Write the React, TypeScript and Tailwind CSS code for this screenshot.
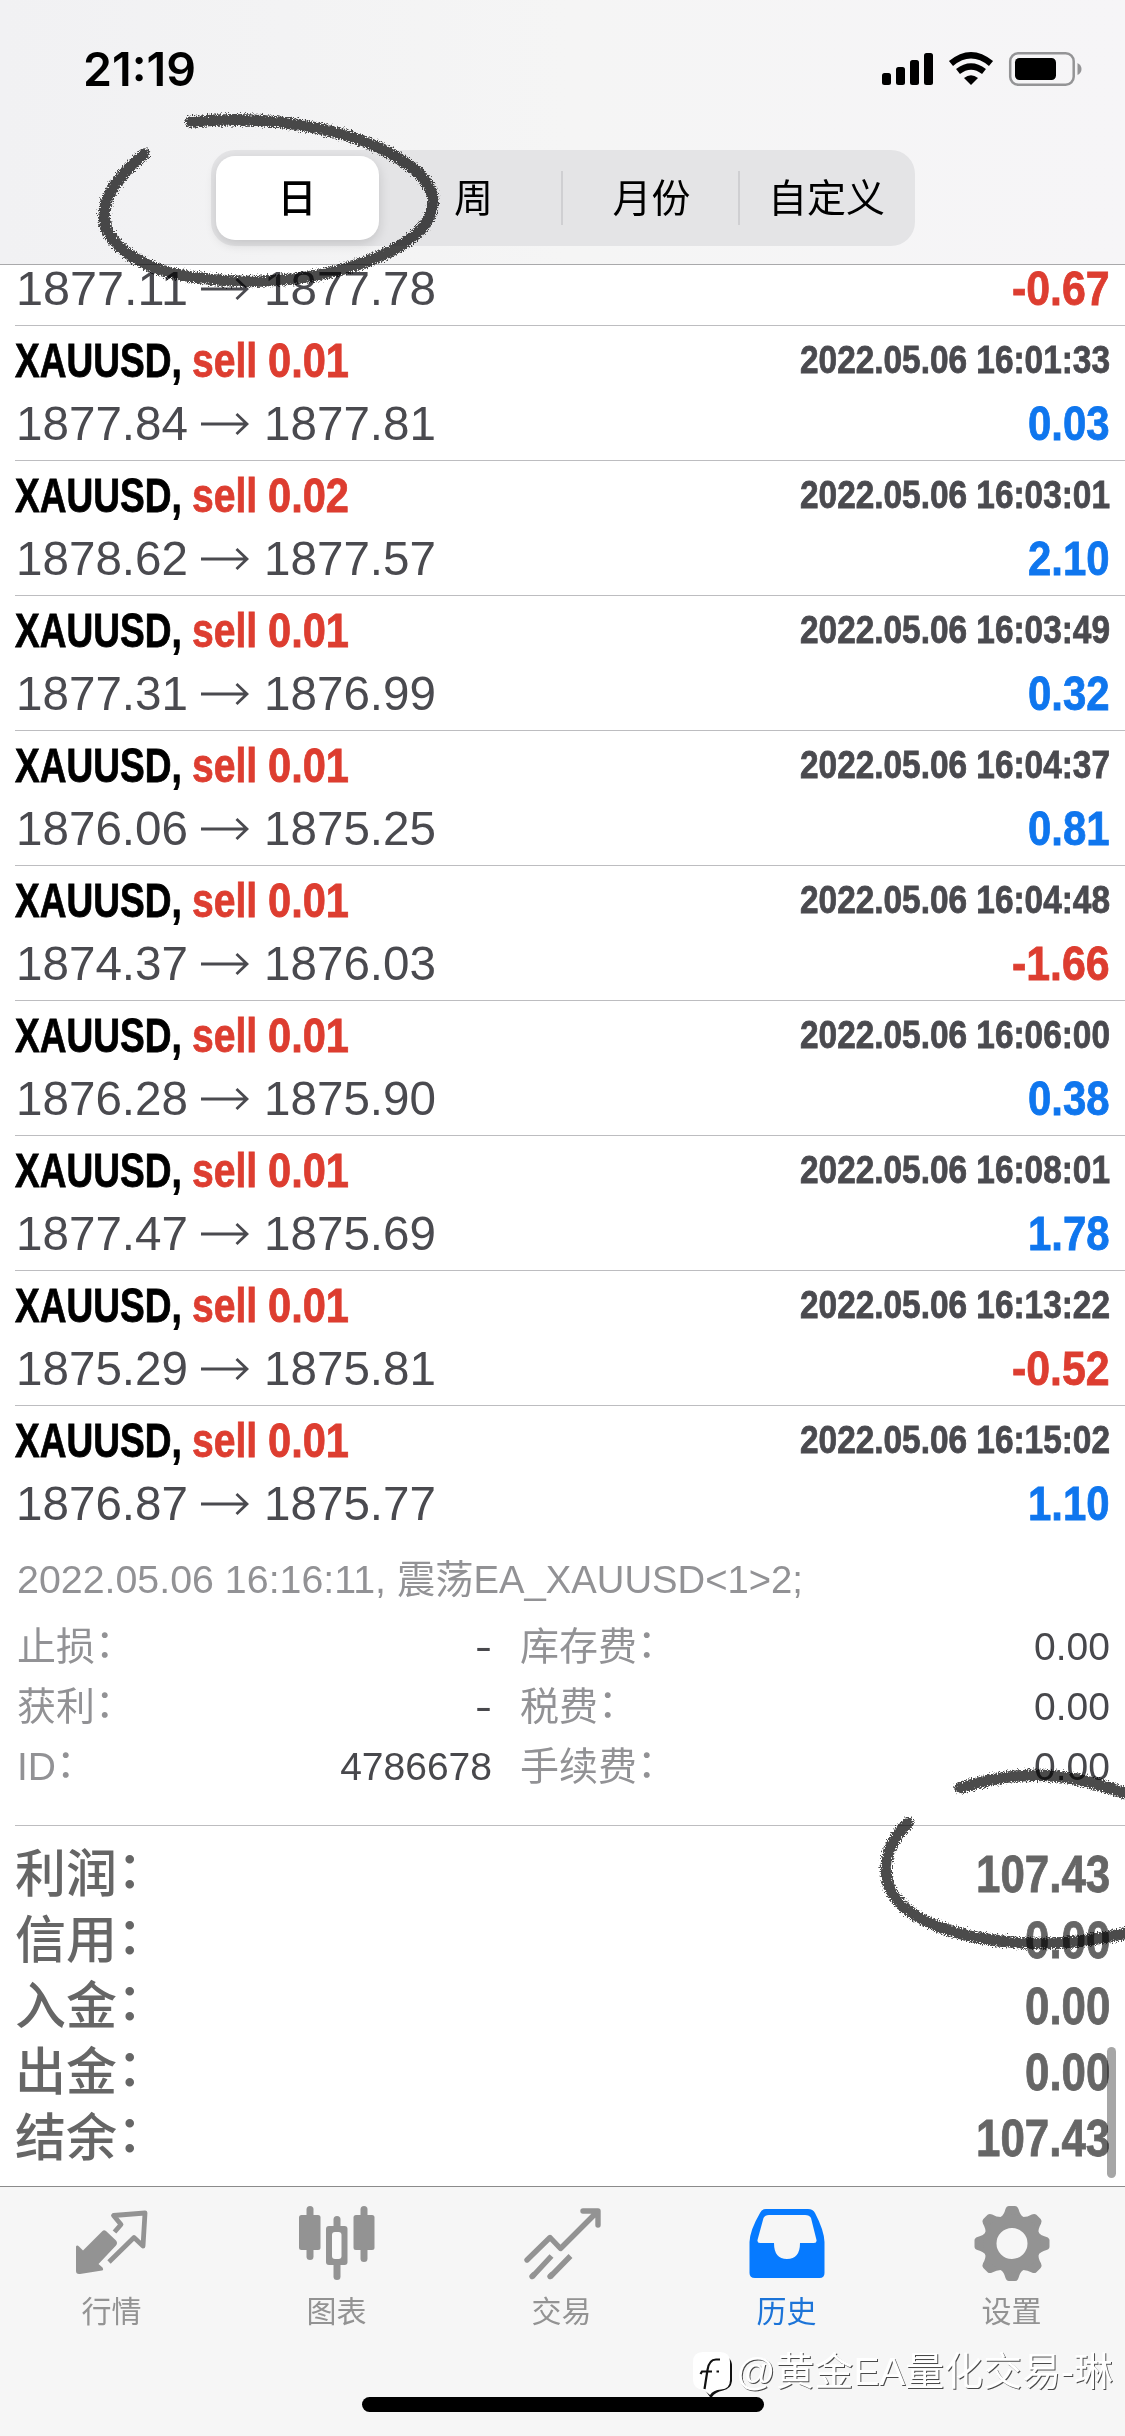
import { useLayoutEffect, useRef, type ReactNode } from "react";

/** Text squeezed or stretched horizontally so that its advance equals `width`. */
function Fit({ width, className = "", children }: { width: number; className?: string; children: ReactNode }) {
  const ref = useRef<HTMLSpanElement>(null);
  useLayoutEffect(() => {
    const el = ref.current;
    if (!el) return;
    el.style.transform = "none";
    el.style.transform = `scaleX(${width / el.getBoundingClientRect().width})`;
  }, [width, children]);
  return (
    <span className="inline-block whitespace-nowrap" style={{ width }}>
      <span ref={ref} className={`inline-block origin-left whitespace-pre ${className}`}>
        {children}
      </span>
    </span>
  );
}

/** Width of condensed bold figures for a given digit pitch. */
function figures(text: string, digit: number) {
  return [...text].reduce((w, c) => w + (c === "." ? digit * 0.5 : c === "-" ? digit * 0.69 : digit), 0);
}

/** Field name followed by a raised full-width colon. */
function Label({ children }: { children: ReactNode }) {
  return (
    <span>
      {children}
      <span className="inline-block -translate-y-[0.07em]">：</span>
    </span>
  );
}

type Deal = { lots: string; time: string; from: string; to: string; profit: string };

const deals: Deal[] = [
  { lots: "0.01", time: "2022.05.06 16:01:33", from: "1877.84", to: "1877.81", profit: "0.03" },
  { lots: "0.02", time: "2022.05.06 16:03:01", from: "1878.62", to: "1877.57", profit: "2.10" },
  { lots: "0.01", time: "2022.05.06 16:03:49", from: "1877.31", to: "1876.99", profit: "0.32" },
  { lots: "0.01", time: "2022.05.06 16:04:37", from: "1876.06", to: "1875.25", profit: "0.81" },
  { lots: "0.01", time: "2022.05.06 16:04:48", from: "1874.37", to: "1876.03", profit: "-1.66" },
  { lots: "0.01", time: "2022.05.06 16:06:00", from: "1876.28", to: "1875.90", profit: "0.38" },
  { lots: "0.01", time: "2022.05.06 16:08:01", from: "1877.47", to: "1875.69", profit: "1.78" },
  { lots: "0.01", time: "2022.05.06 16:13:22", from: "1875.29", to: "1875.81", profit: "-0.52" },
  { lots: "0.01", time: "2022.05.06 16:15:02", from: "1876.87", to: "1875.77", profit: "1.10" },
];

function PriceLine({ from, to, profit }: { from: string; to: string; profit: string }) {
  return (
    <div className="flex h-[60px] items-center justify-between text-[48px] leading-[60px]">
      <div className="flex items-center pl-px text-[#4a4a4f]">
        <Fit width={172}>{from}</Fit>
        <svg className="ml-[13px] mr-[15px] h-6 w-[48px]" viewBox="0 0 48 24" fill="none" stroke="currentColor" strokeWidth="2.8">
          <path d="M0 12H46M35.5 2L46 12L35.5 22" />
        </svg>
        <Fit width={172}>{to}</Fit>
      </div>
      <Fit
        width={figures(profit, 23.3)}
        className={
          profit.startsWith("-")
            ? "font-bold text-[#dd3d30] [-webkit-text-stroke:0.8px]"
            : "font-bold text-[#0f76ee] [-webkit-text-stroke:0.8px]"
        }
      >
        {profit}
      </Fit>
    </div>
  );
}

function DealRow({ deal }: { deal: Deal }) {
  return (
    <div className="ml-[15px] flex h-[135px] flex-col border-t border-[#bdbdc0] pr-[15px]">
      <div className="mt-[5px] flex h-[60px] items-center justify-between font-bold leading-[60px] [-webkit-text-stroke:0.8px]">
        <div className="flex text-[48px] text-black">
          <Fit width={177}>XAUUSD, </Fit>
          <Fit width={76} className="text-[#dd3d30]">sell </Fit>
          <Fit width={81} className="text-[#dd3d30]">{deal.lots}</Fit>
        </div>
        <div className="-mt-[3px] text-[39px] text-[#4a4a4f]">
          <Fit width={310}>{deal.time}</Fit>
        </div>
      </div>
      <div className="mt-[3px]">
        <PriceLine from={deal.from} to={deal.to} profit={deal.profit} />
      </div>
    </div>
  );
}

const details = [
  ["止损", "-", "库存费", "0.00"],
  ["获利", "-", "税费", "0.00"],
  ["ID", "4786678", "手续费", "0.00"],
];

const totals = [
  ["利润", "107.43"],
  ["信用", "0.00"],
  ["入金", "0.00"],
  ["出金", "0.00"],
  ["结余", "107.43"],
];

function StatusBar() {
  return (
    <div className="flex h-[150px] items-start justify-between pl-[83px] pr-[43px] pt-[42px]">
      <div className="font-['Inter'] text-[46px] font-semibold leading-[54px] text-black">
        <Fit width={113}>21:19</Fit>
      </div>
      <svg className="mt-[9px] h-[38px] w-[200px]" viewBox="0 0 200 38">
        <g fill="#000">
          <rect x="0" y="22" width="9" height="12" rx="2.5" />
          <rect x="14" y="16" width="9" height="18" rx="2.5" />
          <rect x="28" y="9" width="9" height="25" rx="2.5" />
          <rect x="42" y="2" width="9" height="32" rx="2.5" />
        </g>
        <g fill="none" stroke="#000" strokeWidth="6.4">
          <path d="M69 12.5Q89 -4 109 12.5" />
          <path d="M76 20.5Q89 10.5 102 20.5" />
        </g>
        <path d="M82 27Q89 21.5 96 27L89 34Z" />
        <rect x="128.200" y="2.200" width="63.500" height="31.500" rx="8" fill="none" stroke="#949496" strokeWidth="2.500" />
        <rect x="133" y="7" width="41" height="22" rx="4.500" />
        <path d="M195.500 12Q199.500 14 199.500 18T195.500 24Z" fill="#949496" />
      </svg>
    </div>
  );
}

function Segments() {
  return (
    <div className="mx-auto flex h-[96px] w-[704px] items-center rounded-[24px] bg-[#e4e4e6] p-[5px] text-[39px] text-black">
      <div className="flex h-[84px] w-[163px] items-center justify-center rounded-[19px] bg-white pt-[2px] font-medium shadow-[0_4px_12px_rgba(0,0,0,0.14)]">日</div>
      <div className="flex h-[84px] w-[182px] items-center justify-center pl-2 pt-[2px]">周</div>
      <div className="h-[54px] w-[2px] bg-[#cfcfd2]" />
      <div className="flex h-[84px] w-[175px] items-center justify-center pl-[3px] pt-[2px]">月份</div>
      <div className="h-[54px] w-[2px] bg-[#cfcfd2]" />
      <div className="flex h-[84px] flex-1 items-center justify-center pl-[4px] pt-[2px]">自定义</div>
    </div>
  );
}

function QuotesIcon() {
  return (
    <svg className="h-[80px] w-[80px]" viewBox="0 0 80 80" fill="currentColor">
      <path d="M4 40.500Q5 38.500 7 40.500L11 44.500L30.500 25Q32 23.500 34 25L44 34.500Q46 37 44 39.500L26.500 58L30.500 61.500Q32 64 30 64.500L8 68Q4 68.500 4 65Z" />
      <path d="M42.500 26L49 18.500L41.500 9.500L73 7L71 40L62 31.500L37 56" fill="none" stroke="currentColor" strokeWidth="4.800" strokeLinejoin="round" />
    </svg>
  );
}

function ChartIcon() {
  return (
    <svg className="h-[80px] w-[80px]" viewBox="0 0 80 80" fill="currentColor">
      <rect x="9.500" y="0" width="7" height="54" rx="3.500" />
      <rect x="2" y="9" width="21.500" height="35" rx="2.500" />
      <rect x="63.500" y="0" width="7" height="56" rx="3.500" />
      <rect x="56.500" y="9" width="21" height="35" rx="2.500" />
      <rect x="36.500" y="10" width="7" height="64" rx="3.500" />
      <rect x="29" y="20" width="21.500" height="39" rx="3" />
      <rect x="35" y="26" width="9.500" height="27" rx="3" fill="#fafafa" />
    </svg>
  );
}

function TradeIcon() {
  return (
    <svg className="h-[80px] w-[80px]" viewBox="0 0 80 80" fill="none" stroke="currentColor" strokeWidth="5.4">
      <path strokeLinecap="round" strokeLinejoin="round" d="M5 54L28 31.500L38.500 42.500L75 6M61 5H76V19" />
      <path d="M10 71L29.500 50M28 71L48.500 50" />
      <path strokeLinecap="round" d="M10 70.500L12 68.500M28 70.500L30 68.500" />
    </svg>
  );
}

function HistoryIcon() {
  return (
    <svg className="h-[80px] w-[80px]" viewBox="0 0 80 80">
      <path fillRule="evenodd" fill="#067aff" d="M19 3H61Q66 3 68 7Q77 24 77.500 36V67Q77.500 72 72.500 72H8Q2.500 72 2.500 67V36Q3 24 13 7Q15 3 19 3ZM22 9Q18 9 16.500 12L10.500 34Q10 37 13 37H27Q27 53 40 53T53 37H67Q70 37 69.500 34L64 12Q62.500 9 58 9Z" />
    </svg>
  );
}

function SettingsIcon() {
  const teeth = [0, 45, 90, 135, 180, 225, 270, 315];
  return (
    <svg className="h-[80px] w-[80px]" viewBox="0 0 80 80" fill="currentColor">
      {teeth.map((a) => (
        <path key={a} transform={`rotate(${a} 40 37.5)`} d="M28 12Q32 9 33.500 3Q34.500 0 37 0H43Q45.500 0 46.500 3Q48 9 52 12Z" />
      ))}
      <path fillRule="evenodd" d="M40 8.500A29 29 0 1 0 40 66.500A29 29 0 1 0 40 8.500ZM40 22A15.500 15.500 0 1 1 40 53A15.500 15.500 0 1 1 40 22Z" />
    </svg>
  );
}

const tabs = [
  { label: "行情", icon: <QuotesIcon />, active: false },
  { label: "图表", icon: <ChartIcon />, active: false },
  { label: "交易", icon: <TradeIcon />, active: false },
  { label: "历史", icon: <HistoryIcon />, active: true },
  { label: "设置", icon: <SettingsIcon />, active: false },
];

function PencilMarks() {
  return (
    <svg className="pointer-events-none absolute left-0 top-0 h-[2436px] w-[1125px] mix-blend-multiply" viewBox="0 0 1125 2436" fill="none" stroke="#4b4b4b" strokeWidth="11.5" strokeLinecap="round" strokeLinejoin="round">
      <defs>
        <filter id="pencil" filterUnits="userSpaceOnUse" x="0" y="0" width="1125" height="2436">
          <feTurbulence type="fractalNoise" baseFrequency="0.8" numOctaves="2" seed="4" />
          <feDisplacementMap in="SourceGraphic" scale="8" xChannelSelector="R" yChannelSelector="G" />
        </filter>
      </defs>
      <g filter="url(#pencil)">
        <path d="M191 122C241 117 291 120 341 134C391 148 433 174 433 202C432 233 391 257 336 271C286 284 226 285 171 273C131 263 105 239 104 218C103 194 122 173 144 154" />
        <path d="M960 1788C1000 1776 1035 1771 1075 1779C1095 1783 1112 1788 1135 1797" />
        <path d="M908 1823C890 1840 882 1862 888 1883C896 1912 935 1930 985 1939C1035 1947 1085 1944 1135 1931" />
      </g>
    </svg>
  );
}

export default function App() {
  return (
    <div className="relative flex h-[2436px] w-[1125px] flex-col overflow-hidden bg-white font-['Liberation_Sans','Noto_Sans_CJK_SC',sans-serif]" lang="zh-CN">
      <header className="h-[265px] shrink-0 border-b border-[#a9a9ab] bg-linear-to-r from-[#f1f1f3] via-[#f5f5f5] to-[#f6f5f7]">
        <StatusBar />
        <Segments />
      </header>

      <main className="relative flex flex-1 flex-col">
        <div className="ml-[15px] h-[60px] pr-[15px]">
          <div className="-mt-[6px]">
            <PriceLine from="1877.11" to="1877.78" profit="-0.67" />
          </div>
        </div>
        {deals.map((d) => (
          <DealRow key={d.time} deal={d} />
        ))}

        <section className="pl-[17px] pr-[15px] text-[39px] text-[#929295]">
          <div className="mt-[10px] flex h-[60px] leading-[60px]">
            <Fit width={380}>2022.05.06 16:16:11, </Fit>
            <Fit width={406}>震荡EA_XAUUSD&lt;1&gt;2;</Fit>
          </div>
          <div className="mt-[7px]">
            {details.map(([a, b, c, d]) => (
              <div key={a} className="grid h-[60px] grid-cols-[475px_1fr] gap-x-[28px] leading-[60px]">
                <div className="flex justify-between">
                  <Label>{a}</Label>
                  <span className="text-[#48484c]">{b === "-" ? <Fit width={17}>-</Fit> : b}</span>
                </div>
                <div className="flex justify-between">
                  <Label>{c}</Label>
                  <span className="text-[#48484c]">{d}</span>
                </div>
              </div>
            ))}
          </div>
        </section>

        <section className="ml-[15px] mt-[28px] border-t border-[#bdbdc0] pr-[15px] pt-[16px] text-[51px] text-[#666]">
          {totals.map(([label, value]) => (
            <div key={label} className="flex h-[66px] items-center justify-between leading-[66px]">
              <span className="font-medium">
                <Label>{label}</Label>
              </span>
              <Fit width={figures(value, 24.4)} className="font-bold [-webkit-text-stroke:0.8px]">{value}</Fit>
            </div>
          ))}
        </section>
        <div className="absolute right-[9px] bottom-[8px] h-[131px] w-[9px] rounded-full bg-black/35" />
      </main>

      <footer className="relative h-[250px] shrink-0 border-t border-[#8b8b8b] bg-[#f6f6f6]">
        <nav className="-ml-px grid grid-cols-5 pt-[19px] pr-px">
          {tabs.map((t) => (
            <div key={t.label} className={t.active ? "flex flex-col items-center text-[#1c74d8]" : "flex flex-col items-center text-[#939393]"}>
              {t.icon}
              <span className="mt-[4px] text-[30px] leading-[44px]">{t.label}</span>
            </div>
          ))}
        </nav>
        <div className="absolute bottom-[24px] left-[362px] h-[15px] w-[402px] rounded-full bg-black" />
        <div className="absolute left-[692px] top-[155px] flex items-center text-[39px] leading-[60px] text-white">
          <svg className="mt-[3px] h-[48px] w-[44px]" viewBox="0 0 44 48">
            <path fill="#111" d="M37 8Q40 11 40 16V31Q39 39 31 40.500Q23 42 20 47H18L13 40Z" />
            <path fill="#fff" d="M11 2H28Q38 2 38 12V30Q38 39 29 39.500Q21 40 18 45L12 40Q1 39 1 30V12Q1 2 11 2Z" />
            <path d="M12.500 39L15.500 20Q17 9.500 24 9.500H28M8.500 24L10 21.500H20M24.500 21.500H27" fill="none" stroke="#111" strokeWidth="2.200" />
          </svg>
          <Fit width={377} className="[text-shadow:1px_1px_0.5px_rgba(0,0,0,0.7)]">@黄金EA量化交易-琳</Fit>
        </div>
      </footer>
      <PencilMarks />
    </div>
  );
}
